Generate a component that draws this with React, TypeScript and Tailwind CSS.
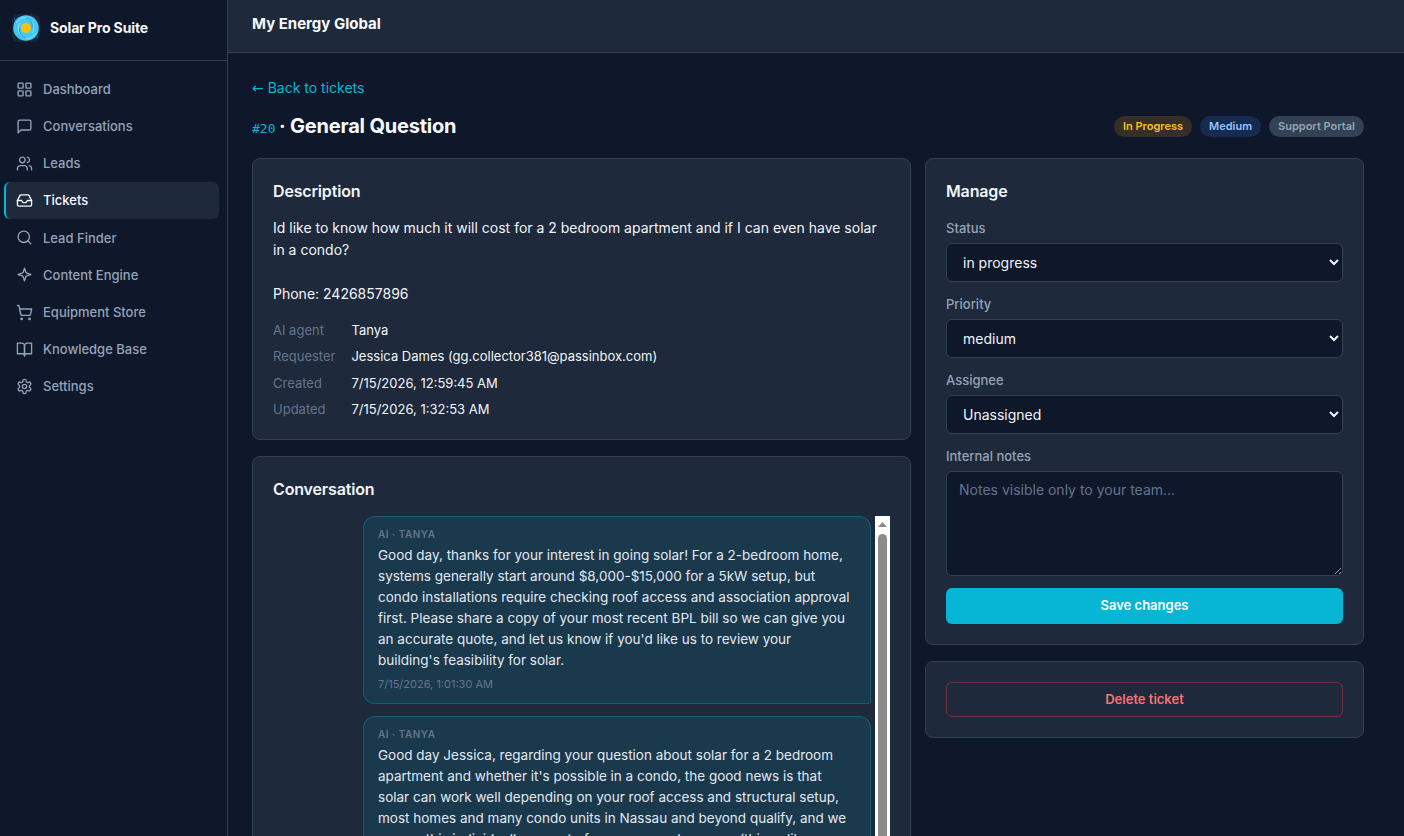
import type { ReactNode } from 'react';
import clsx from 'clsx';

type IconName =
  | 'grid'
  | 'chat'
  | 'users'
  | 'inbox'
  | 'search'
  | 'spark'
  | 'cart'
  | 'book'
  | 'gear';

const ICONS: Record<IconName, ReactNode> = {
  grid: (
    <>
      <rect x="3" y="3" width="7" height="7" rx="1" />
      <rect x="14" y="3" width="7" height="7" rx="1" />
      <rect x="3" y="14" width="7" height="7" rx="1" />
      <rect x="14" y="14" width="7" height="7" rx="1" />
    </>
  ),
  chat: <path d="M21 15a2 2 0 0 1-2 2H7l-4 4V5a2 2 0 0 1 2-2h14a2 2 0 0 1 2 2z" />,
  users: (
    <>
      <path d="M16 21v-2a4 4 0 0 0-4-4H6a4 4 0 0 0-4 4v2" />
      <circle cx="9" cy="7" r="4" />
      <path d="M22 21v-2a4 4 0 0 0-3-3.87M16 3.13a4 4 0 0 1 0 7.75" />
    </>
  ),
  inbox: (
    <>
      <path d="M22 12h-6l-2 3h-4l-2-3H2" />
      <path d="M5.45 5.11 2 12v6a2 2 0 0 0 2 2h16a2 2 0 0 0 2-2v-6l-3.45-6.89A2 2 0 0 0 16.76 4H7.24a2 2 0 0 0-1.79 1.11z" />
    </>
  ),
  search: (
    <>
      <circle cx="11" cy="11" r="8" />
      <path d="m21 21-4.35-4.35" />
    </>
  ),
  spark: (
    <path d="m12 3 1.9 5.8a2 2 0 0 0 1.3 1.3L21 12l-5.8 1.9a2 2 0 0 0-1.3 1.3L12 21l-1.9-5.8a2 2 0 0 0-1.3-1.3L3 12l5.8-1.9a2 2 0 0 0 1.3-1.3z" />
  ),
  cart: (
    <>
      <circle cx="8" cy="21" r="1" />
      <circle cx="19" cy="21" r="1" />
      <path d="M2.05 2.05h2l2.66 12.42a2 2 0 0 0 2 1.58h9.78a2 2 0 0 0 1.95-1.57l1.65-7.43H5.12" />
    </>
  ),
  book: (
    <>
      <path d="M2 3h6a4 4 0 0 1 4 4v14a3 3 0 0 0-3-3H2z" />
      <path d="M22 3h-6a4 4 0 0 0-4 4v14a3 3 0 0 1 3-3h7z" />
    </>
  ),
  gear: (
    <>
      <path d="M12.22 2h-.44a2 2 0 0 0-2 2v.18a2 2 0 0 1-1 1.73l-.43.25a2 2 0 0 1-2 0l-.15-.08a2 2 0 0 0-2.73.73l-.22.38a2 2 0 0 0 .73 2.73l.15.1a2 2 0 0 1 1 1.72v.51a2 2 0 0 1-1 1.74l-.15.09a2 2 0 0 0-.73 2.73l.22.38a2 2 0 0 0 2.73.73l.15-.08a2 2 0 0 1 2 0l.43.25a2 2 0 0 1 1 1.73V20a2 2 0 0 0 2 2h.44a2 2 0 0 0 2-2v-.18a2 2 0 0 1 1-1.73l.43-.25a2 2 0 0 1 2 0l.15.08a2 2 0 0 0 2.73-.73l.22-.39a2 2 0 0 0-.73-2.73l-.15-.08a2 2 0 0 1-1-1.74v-.5a2 2 0 0 1 1-1.74l.15-.09a2 2 0 0 0 .73-2.73l-.22-.38a2 2 0 0 0-2.73-.73l-.15.08a2 2 0 0 1-2 0l-.43-.25a2 2 0 0 1-1-1.73V4a2 2 0 0 0-2-2z" />
      <circle cx="12" cy="12" r="3" />
    </>
  ),
};

const NAV: { label: string; icon: IconName }[] = [
  { label: 'Dashboard', icon: 'grid' },
  { label: 'Conversations', icon: 'chat' },
  { label: 'Leads', icon: 'users' },
  { label: 'Tickets', icon: 'inbox' },
  { label: 'Lead Finder', icon: 'search' },
  { label: 'Content Engine', icon: 'spark' },
  { label: 'Equipment Store', icon: 'cart' },
  { label: 'Knowledge Base', icon: 'book' },
  { label: 'Settings', icon: 'gear' },
];

const META = [
  ['AI agent', 'Tanya'],
  ['Requester', 'Jessica Dames (gg.collector381@passinbox.com)'],
  ['Created', '7/15/2026, 12:59:45 AM'],
  ['Updated', '7/15/2026, 1:32:53 AM'],
];

const MESSAGES = [
  {
    body: "Good day, thanks for your interest in going solar! For a 2-bedroom home, systems generally start around $8,000-$15,000 for a 5kW setup, but condo installations require checking roof access and association approval first. Please share a copy of your most recent BPL bill so we can give you an accurate quote, and let us know if you'd like us to review your building's feasibility for solar.",
    time: '7/15/2026, 1:01:30 AM',
  },
  {
    body: "Good day Jessica, regarding your question about solar for a 2 bedroom apartment and whether it's possible in a condo, the good news is that solar can work well depending on your roof access and structural setup, most homes and many condo units in Nassau and beyond qualify, and we assess this individually as part of your proposal process (things like association approval and roof rights).",
    time: '7/15/2026, 1:32:53 AM',
  },
];

function Logo() {
  return (
    <svg className="h-7 w-7 shrink-0" viewBox="0 0 28 28" aria-hidden="true">
      <rect width="28" height="28" rx="6" fill="#1a2638" />
      <path d="M2 4h9L3 12zM26 24h-9l8-8z" fill="#0b4f9c" />
      <circle cx="14" cy="14" r="12.8" fill="#45c8f4" />
      <path d="M4 9C8 3 14 2 18 6c4 3 5 9 2 13M24 19c-4 6-10 7-14 3-4-3-5-9-2-13" fill="none" stroke="#8be4fb" strokeWidth="1" />
      <path d="M14 4c5 1 7 6 6 10M14 24c-5-1-7-6-6-10" fill="none" stroke="#1d9bd8" strokeWidth="1" />
      <circle cx="14" cy="14" r="5.1" fill="#fbc20c" />
    </svg>
  );
}

function Sidebar() {
  return (
    <aside className="flex w-[228px] shrink-0 flex-col border-r border-[#334155]">
      <div className="flex h-[61px] items-center gap-2.5 border-b border-[#334155] px-3 pb-1">
        <Logo />
        <span className="pb-0.5 text-[14px] font-bold tracking-[-0.01em] text-slate-50">Solar Pro Suite</span>
      </div>
      <nav className="flex flex-col pt-[9.8px] pr-2 pl-1">
        {NAV.map(({ label, icon }) => {
          const active = label === 'Tickets';
          return (
            <a
              key={label}
              className={clsx(
                'flex h-[37.125px] items-center gap-2.5 rounded-md border-l-2 pl-2.5 text-[13px] font-medium',
                active ? 'border-[#06b6d4] bg-[#1e293b] text-slate-50' : 'border-transparent text-[#94a3b8]',
              )}
            >
              <svg
                className="h-[17px] w-[17px] shrink-0"
                viewBox="0 0 24 24"
                fill="none"
                stroke="currentColor"
                strokeWidth={1.9}
                strokeLinecap="round"
                strokeLinejoin="round"
                aria-hidden="true"
              >
                {ICONS[icon]}
              </svg>
              <span className="pt-[0.9px]">{label}</span>
            </a>
          );
        })}
      </nav>
    </aside>
  );
}

function Card({ title, className, children }: { title?: string; className?: string; children: ReactNode }) {
  return (
    <section className={clsx('rounded-lg border border-[#334155] bg-[#1e293b] p-5', className)}>
      {title && (
        <h2 className="mb-3.5 text-[16px] leading-6 font-semibold tracking-[-0.01em] text-slate-100">{title}</h2>
      )}
      {children}
    </section>
  );
}

function Field({ label, value }: { label: string; value: string }) {
  return (
    <label className="mb-3 block text-[13px] leading-5 font-medium text-[#94a3b8]">
      {label}
      <select className="mt-[5px] block h-[39px] w-full rounded-md border border-[#334155] bg-[#0f172a] px-3 text-[14px] font-normal text-slate-100">
        <option>{value}</option>
      </select>
    </label>
  );
}

function Message({ body, time }: { body: string; time: string }) {
  return (
    <div className="ml-auto w-[508px] rounded-xl rounded-br-[3px] border border-[#06b6d4]/30 bg-[#1b394d] px-3.5 pt-2.5 pb-[11px]">
      <div className="text-[10px] leading-[15px] font-semibold tracking-[0.5px] text-[#64748b]">AI · TANYA</div>
      <p className="mt-[3px] text-[13.5px] leading-[21px] text-slate-200">{body}</p>
      <div className="mt-[5px] text-[11px] leading-4 text-[#64748b]">{time}</div>
    </div>
  );
}

export default function App() {
  return (
    <div className="flex h-[836px] overflow-hidden bg-[#0f172a] font-['Inter',sans-serif] text-slate-100">
      <Sidebar />
      <div className="flex min-w-0 flex-1 flex-col">
        <header className="flex h-[53px] shrink-0 items-center border-b border-[#334155] bg-[#1e293b] px-6 pb-1">
          <span className="text-[15px] font-bold text-slate-50">My Energy Global</span>
        </header>
        <main className="min-h-0 flex-1 overflow-hidden pt-6 pr-10 pl-6">
          <a className="block text-[14px] leading-[22px] text-[#06b6d4]">
            <span className="font-['DejaVu_Sans',sans-serif]">←</span> Back to tickets
          </a>
          <div className="mt-[11px] flex h-8 items-center justify-between">
            <h1 className="pt-0.5 text-[20px] leading-8 font-bold tracking-[-0.01em] text-slate-50">
              <span className="-mr-px font-['DejaVu_Sans_Mono',monospace] text-[13px] font-normal tracking-normal text-[#06b6d4]">
                #20
              </span>{' '}
              · General Question
            </h1>
            <div className="flex gap-2 text-[11px] leading-[21px] font-semibold">
              <span className="rounded-full bg-[#352f28] px-[9px] text-[#fbbf24]">In Progress</span>
              <span className="rounded-full bg-[#172a50] px-[9px] text-[#93c5fd]">Medium</span>
              <span className="rounded-full bg-[#334155] px-[9px] text-[#94a3b8]">Support Portal</span>
            </div>
          </div>

          <div className="mt-4 grid grid-cols-[659px_439px] items-start gap-3.5">
            <div className="flex flex-col gap-4">
              <Card title="Description" className="h-[282px]">
                <p className="text-[14px] leading-[22px] whitespace-pre-line">
                  {'Id like to know how much it will cost for a 2 bedroom apartment and if I can even have solar in a condo?\n\nPhone: 2426857896'}
                </p>
                <dl className="mt-[15px] grid grid-cols-[auto_1fr] gap-x-4 gap-y-[6.4px] text-[13px] leading-5">
                  {META.map(([key, value]) => (
                    <div key={key} className="contents">
                      <dt className="text-[#64748b]">{key}</dt>
                      <dd>{value}</dd>
                    </div>
                  ))}
                </dl>
              </Card>

              <Card title="Conversation" className="h-[640px]">
                <div className="mt-[15px] flex h-[560px]">
                  <div className="flex flex-1 flex-col gap-3 pr-1">
                    {MESSAGES.map((m) => (
                      <Message key={m.time} {...m} />
                    ))}
                  </div>
                  {/* Scrollbar */}
                  <div className="flex w-[15px] flex-col items-center bg-white">
                    <svg className="h-[18px] w-[15px] shrink-0" viewBox="0 0 15 18" aria-hidden="true">
                      <path d="M3 11 7.5 6 12 11z" fill="#8b8b8b" />
                    </svg>
                    <div className="w-[9px] flex-1 rounded-full bg-[#8b8b8b]" />
                  </div>
                </div>
              </Card>
            </div>

            <div className="flex flex-col gap-4">
              <Card title="Manage">
                <div className="pt-px">
                  <Field label="Status" value="in progress" />
                  <Field label="Priority" value="medium" />
                  <Field label="Assignee" value="Unassigned" />
                  <label className="block text-[13px] leading-5 font-medium text-[#94a3b8]">
                    Internal notes
                    <textarea
                      placeholder="Notes visible only to your team..."
                      className="mt-[5px] block h-[105px] w-full resize-y rounded-md border border-[#334155] bg-[#0f172a] px-3 py-2 text-[14px] font-normal text-slate-100 placeholder:text-[#64748b]"
                    />
                  </label>
                  <button className="mt-3 h-9 w-full rounded-md bg-[#06b6d4] text-[13px] font-semibold text-white">
                    Save changes
                  </button>
                </div>
              </Card>
              <Card>
                <button className="block h-[35px] w-full rounded-md border border-[#ef4444]/40 text-[13px] font-semibold text-[#f87171]">
                  Delete ticket
                </button>
              </Card>
            </div>
          </div>
        </main>
      </div>
    </div>
  );
}
